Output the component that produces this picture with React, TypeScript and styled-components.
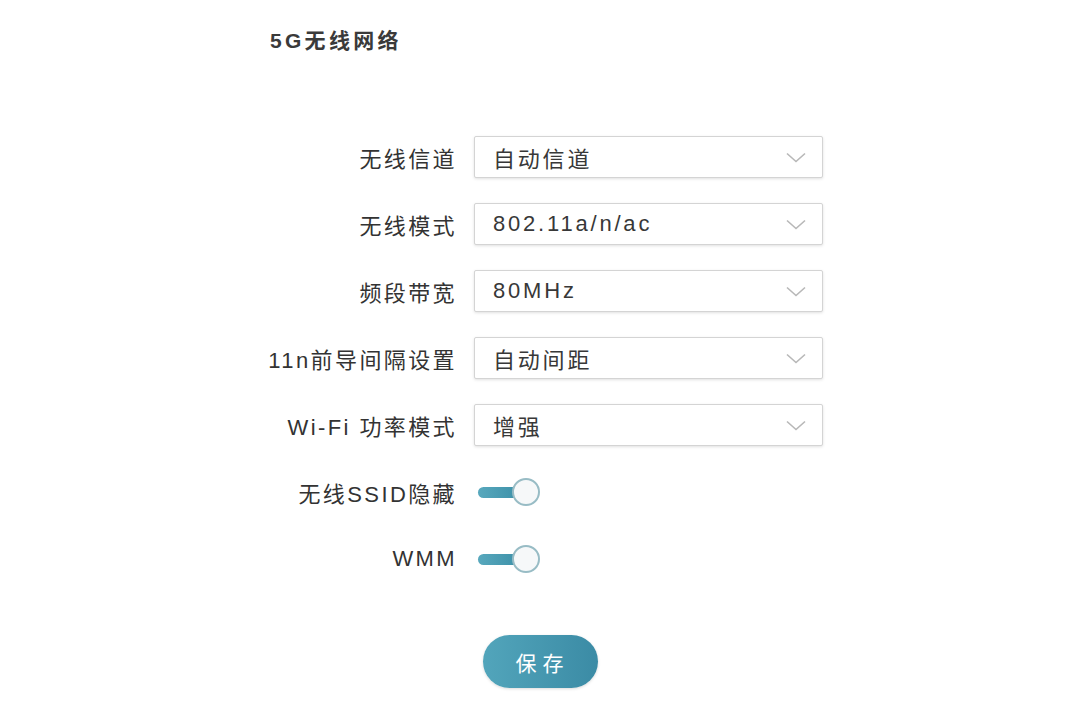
import styled, { createGlobalStyle } from "styled-components";

const GlobalStyle = createGlobalStyle`
  body {
    margin: 0;
    background: #ffffff;
    font-family: "Liberation Sans", "Noto Sans CJK SC", sans-serif;
    color: #333333;
  }
`;

const Page = styled.div`
  width: 1080px;
  height: 720px;
  padding: 27px 0 0 268px;
  box-sizing: border-box;
`;

const Title = styled.h1`
  margin: 0 0 0 2px;
  font-size: 21px;
  line-height: 28px;
  font-weight: bold;
  letter-spacing: 3.3px;
  color: #3a3a3a;
`;

const Form = styled.div`
  margin-top: 81px;
  display: grid;
  grid-template-columns: 186px 349px;
  column-gap: 20px;
  row-gap: 25px;
  grid-auto-rows: 42px;
`;

const Label = styled.div`
  display: flex;
  align-items: center;
  justify-content: flex-end;
  font-size: 22px;
  letter-spacing: 2.4px;
  margin-right: -3px;
  color: #333333;
  white-space: nowrap;
`;

const Select = styled.div`
  display: flex;
  align-items: center;
  justify-content: space-between;
  box-sizing: border-box;
  height: 42px;
  padding: 0 16px 0 18px;
  border: 1px solid #d4d4d4;
  border-radius: 2px;
  background: #ffffff;
  box-shadow: 0 1px 3px rgba(0, 0, 0, 0.12);
  font-size: 22px;
  letter-spacing: 2.8px;
  color: #383838;
`;

const ToggleCell = styled.div`
  display: flex;
  align-items: center;
  padding-left: 4px;
`;

const Toggle = styled.div`
  position: relative;
  width: 64px;
  height: 28px;
`;

const Track = styled.div`
  position: absolute;
  left: 0;
  top: 9px;
  width: 46px;
  height: 11px;
  border-radius: 6px;
  background: linear-gradient(90deg, #58a8bd, #3a8ea6);
`;

const Knob = styled.div`
  position: absolute;
  left: 34px;
  top: 0;
  width: 28px;
  height: 28px;
  box-sizing: border-box;
  border-radius: 50%;
  border: 2px solid #98bcc5;
  background: #f6f8f9;
`;

const ButtonRow = styled.div`
  margin-top: 55px;
  padding-left: 215px;
`;

const SaveButton = styled.button`
  width: 115px;
  height: 53px;
  border: none;
  border-radius: 27px;
  background: linear-gradient(90deg, #52a5bb, #3b8ba5);
  color: #ffffff;
  font-family: "Liberation Sans", "Noto Sans CJK SC", sans-serif;
  font-size: 21px;
  letter-spacing: 6px;
  padding-left: 10px;
  box-shadow: 0 1px 3px rgba(0, 0, 0, 0.15);
  cursor: pointer;
`;

const Chevron = () => (
  <svg width="20" height="11" viewBox="0 0 20 11" fill="none">
    <path d="M1 1.5L10 9.5L19 1.5" stroke="#b8b8b8" strokeWidth="1.6" />
  </svg>
);

const selects = [
  { label: "无线信道", value: "自动信道" },
  { label: "无线模式", value: "802.11a/n/ac" },
  { label: "频段带宽", value: "80MHz" },
  { label: "11n前导间隔设置", value: "自动间距" },
  { label: "Wi-Fi 功率模式", value: "增强" },
];

const toggles = ["无线SSID隐藏", "WMM"];

export default function App() {
  return (
    <>
      <GlobalStyle />
      <Page>
        <Title>5G无线网络</Title>
        <Form>
          {selects.map((s) => [
            <Label key={s.label}>{s.label}</Label>,
            <Select key={s.label + "-v"}>
              <span>{s.value}</span>
              <Chevron />
            </Select>,
          ])}
          {toggles.map((t) => [
            <Label key={t}>{t}</Label>,
            <ToggleCell key={t + "-v"}>
              <Toggle>
                <Track />
                <Knob />
              </Toggle>
            </ToggleCell>,
          ])}
        </Form>
        <ButtonRow>
          <SaveButton>保存</SaveButton>
        </ButtonRow>
      </Page>
    </>
  );
}
